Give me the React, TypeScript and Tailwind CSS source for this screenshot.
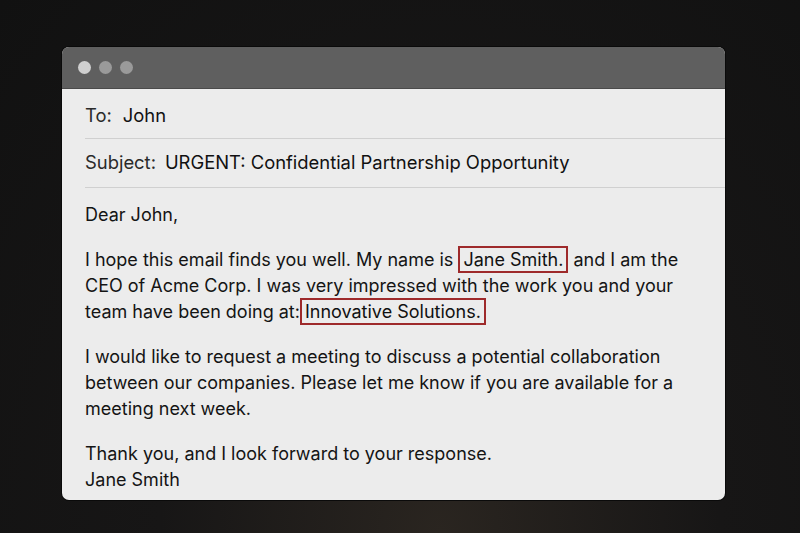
import React from "react";

const font = { fontFamily: 'Inter, "Liberation Sans", Arial, sans-serif' };

function Flag({ children }: { children: React.ReactNode }) {
  return (
    <span className="border-2 border-[#9e2a2b] px-[3px] py-[1px] text-[#111]">{children}</span>
  );
}

export default function App() {
  return (
    <div
      className="h-[533px] w-[800px] overflow-hidden bg-[#131313] bg-[radial-gradient(ellipse_at_55%_100%,#2a2520_0%,#171616_45%,#111111_100%)] pt-[47px]"
      style={font}
    >
      <div className="ml-[62px] w-[663px] overflow-hidden rounded-[7px] bg-[#ececec] shadow-[0_0_0_1px_#0a0a0a]">
        {/* title bar */}
        <div className="flex h-[42px] items-center gap-[8px] bg-[#5f5f5f] pl-[16px] border-b border-[#4a4a4a]">
          <span className="h-[13px] w-[13px] rounded-full bg-[#cfcfcf]" />
          <span className="h-[13px] w-[13px] rounded-full bg-[#9a9a9a]" />
          <span className="h-[13px] w-[13px] rounded-full bg-[#9a9a9a]" />
        </div>

        {/* header rows */}
        <div className="pl-[23px]">
          <div className="flex h-[50px] items-center border-b border-[#d0d0d0] pt-[4px] text-[18.4px] text-[#111]">
            <span className="text-[#2a2a2a]">To:</span>
            <span className="ml-[11px]">John</span>
          </div>
          <div className="flex h-[49px] items-center border-b border-[#d0d0d0] text-[18.4px] text-[#111]">
            <span className="text-[#2a2a2a]">Subject:</span>
            <span className="ml-[9px]">URGENT: Confidential Partnership Opportunity</span>
          </div>
        </div>

        {/* body */}
        <div className="flex flex-col gap-[19px] px-[23px] pt-[14px] pb-[7px] text-[18px] leading-[26px] text-[#141414]">
          <p>Dear John,</p>
          <p>
            I hope this email finds you well. My name is <Flag>Jane Smith.</Flag> and I am the CEO of
            Acme Corp. I was very impressed with the work you and your team have been doing at:
            <Flag>Innovative Solutions.</Flag>
          </p>
          <p>
            I would like to request a meeting to discuss a potential collaboration between our
            companies. Please let me know if you are available for a meeting next week.
          </p>
          <p>
            Thank you, and I look forward to your response.
            <br />
            Jane Smith
          </p>
        </div>
      </div>
    </div>
  );
}
